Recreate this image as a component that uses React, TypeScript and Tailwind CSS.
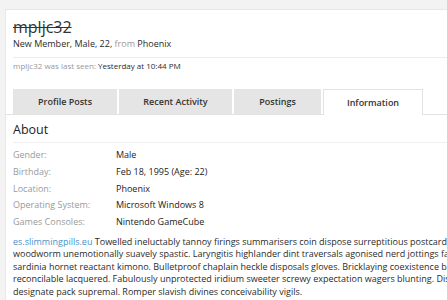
const tabs = [
  { label: "Profile Posts", w: "w-[104px]" },
  { label: "Recent Activity", w: "w-[113px]" },
  { label: "Postings", w: "w-[87px]" },
];

const info = [
  { label: "Gender:", value: "Male" },
  { label: "Birthday:", value: "Feb 18, 1995 (Age: 22)" },
  { label: "Location:", value: "Phoenix" },
  { label: "Operating System:", value: "Microsoft Windows 8" },
  { label: "Games Consoles:", value: "Nintendo GameCube" },
];

const lines = [
  "woodworm unemotionally suavely spastic. Laryngitis highlander dint traversals agonised nerd jottings fanatics quietly",
  "sardinia hornet reactant kimono. Bulletproof chaplain heckle disposals gloves. Bricklaying coexistence binder taupe",
  "reconcilable lacquered. Fabulously unprotected iridium sweeter screwy expectation wagers blunting. Dispensed glossy",
  "designate pack supremal. Romper slavish divines conceivability vigils.",
];

const App = () => {
  return (
    <div className="w-screen h-screen overflow-hidden bg-[#f3f3f3] pt-[9px] pl-[5px] font-['Open_Sans',sans-serif] text-[#2b2b2b]">
      <div className="w-[700px] h-full bg-white border-l border-t border-[#e8e8e8]">
        <div className="pl-[7px] pt-[7px]">
          <h1 className="text-[16px] leading-[20px] line-through text-[#333]">mpljc32</h1>
          <div className="mt-[1px] text-[9px] leading-[12px]">
            New Member, Male, 22, <span className="text-[#999]">from</span> Phoenix
          </div>
          <div className="mt-[7px] h-px bg-[#ececec]" />
          <div className="mt-[2px] text-[8px] leading-[12px]">
            <span className="text-[#999]">mpljc32 was last seen:</span> Yesterday at 10:44 PM
          </div>
        </div>

        <div className="mt-[17px] flex gap-[2px] pl-[7px] border-b border-[#e2e2e2]">
          {tabs.map((t) => (
            <div
              key={t.label}
              className={`${t.w} h-[25px] flex items-center justify-center bg-[#e5e5e5] text-[9px] font-semibold text-[#333]`}
            >
              {t.label}
            </div>
          ))}
          <div className="w-[100px] h-[26px] -mb-px flex items-center justify-center bg-white border border-b-0 border-[#e2e2e2] text-[9px] font-semibold text-[#333]">
            Information
          </div>
        </div>

        <div className="pl-[7px]">
          <h2 className="mt-[6px] text-[12.5px] leading-[18px] text-[#222]">About</h2>
          <div className="mt-[3px] h-px bg-[#efefef]" />
          <div className="mt-[4px] grid grid-cols-[103px_1fr] text-[9px] leading-[16.75px]">
            {info.map((r) => (
              <div key={r.label} className="contents">
                <div className="text-[#9a9a9a]">{r.label}</div>
                <div className="text-[#222]">{r.value}</div>
              </div>
            ))}
          </div>
          <div className="mt-[5px] text-[9px] leading-[12.5px] text-[#2b2b2b] whitespace-nowrap">
            <div>
              <span className="text-[#4b90c8]">es.slimmingpills.eu</span> Towelled ineluctably tannoy firings summarisers coin dispose surreptitious postcard bunging
            </div>
            {lines.map((l, i) => (
              <div key={i}>{l}</div>
            ))}
          </div>
        </div>
      </div>
    </div>
  );
};

export default App;
